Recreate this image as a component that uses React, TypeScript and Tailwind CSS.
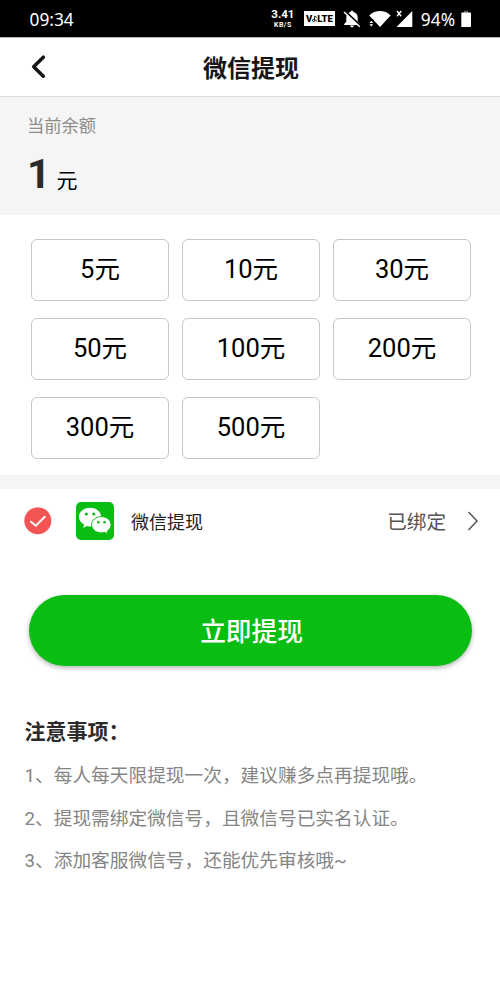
import { useState } from 'react'

const amounts = [5, 10, 30, 50, 100, 200, 300, 500]

const notes = [
  '1、每人每天限提现一次，建议赚多点再提现哦。',
  '2、提现需绑定微信号，且微信号已实名认证。',
  '3、添加客服微信号，还能优先审核哦~',
]

function StatusBar() {
  return (
    <div className="flex h-[37px] items-center bg-black pl-[29.5px] pr-[29px] pt-px font-['Noto_Sans',sans-serif] text-white">
      <span className="pt-px text-[17.3px] leading-none">09:34</span>
      <div className="ml-auto flex items-center">
        <div className="flex w-6 flex-col items-center font-['Roboto',sans-serif] font-bold leading-none">
          <span className="text-[11.5px] leading-[9px]">3.41</span>
          <span className="mt-[3px] text-[7px] leading-[6px] tracking-[0.5px]">KB/S</span>
        </div>
        <div className="ml-[9px] flex h-[15px] w-[31px] items-center justify-center bg-white font-['Roboto',sans-serif] text-[9.5px] font-black leading-none text-black">
          <span>V</span>
          <svg width="5" height="8" viewBox="0 0 5 8" fill="none" stroke="currentColor">
            <circle cx="1.6" cy="5.4" r="1.1" />
            <path d="M2.6 5V1.2l2 1.2M4 4.6v2" strokeWidth="0.9" />
          </svg>
          <span>LTE</span>
        </div>
        <svg className="ml-2" width="18" height="18" viewBox="0 0 18 18">
          <path d="M9 .8c.8 0 1.400.5 1.400 1.300 2.800.6 4.300 2.700 4.300 5.400v4.200l2.100 2.300v.9H1.200V14l2.100-2.300V7.500c0-2.700 1.500-4.800 4.300-5.400 0-.8.6-1.300 1.400-1.300zM7.100 15.400h3.800a1.900 1.900 0 0 1-3.800 0z" fill="#fff" />
          <path d="M2.200 1.300l16 15" stroke="#000" strokeWidth="2" />
          <path d="M1 2l15.800 14.700" stroke="#fff" strokeWidth="1.5" />
        </svg>
        <svg className="ml-2" width="22" height="18" viewBox="0 0 22 18" fill="#fff">
          <path d="M.2 5.5C6-.4 15.800-.4 21.600 5.500L11 17z" />
          <path d="M0 9.500h4.500l3 8H0z" fill="#000" />
          <path d="M.3 13l2-2.200 2 2.200zM.3 14.300h4l-2 2.200z" />
        </svg>
        <svg className="ml-[5px]" width="17" height="18" viewBox="0 0 17 18">
          <path d="M16.300 1v16H.5z" fill="#fff" />
          <path d="M0 0h7v7.500H0z" fill="#000" />
          <path d="M1 1l4.200 5.200M5.200 1L1 6.200" stroke="#fff" strokeWidth="1.400" />
        </svg>
        <span className="ml-2 pt-px text-[17.3px] leading-none">94%</span>
        <svg className="ml-[6px]" width="10" height="18" viewBox="0 0 10 18">
          <path d="M3 .8h4v2H3z" fill="#666" />
          <path d="M1 2.600h8.300a.7.7 0 0 1 .7.7v13a.7.7 0 0 1-.7.7H1a.7.7 0 0 1-.7-.7v-13a.7.7 0 0 1 .7-.7z" fill="#fff" />
        </svg>
      </div>
    </div>
  )
}

function WechatIcon() {
  return (
    <svg width="38" height="38" viewBox="0 0 38 38">
      <rect width="38" height="38" rx="5" fill="#09bd13" />
      <path d="M14 5.700c6.200 0 11.200 4.200 11.200 9.400s-5 9.400-11.200 9.400c-1.200 0-2.300-.1-3.300-.4L7.200 26l.9-3.400C5 21 2.900 18.200 2.900 15.100c0-5.200 4.900-9.400 11.100-9.400z" fill="#fff" />
      <circle cx="10.300" cy="12" r="1.600" fill="#09bd13" />
      <circle cx="17.800" cy="12" r="1.600" fill="#09bd13" />
      <path d="M25.300 14.600c5.400 0 9.700 3.600 9.700 8.100 0 2.600-1.500 4.900-3.700 6.400l.5 2.800-3-1.500c-1.100.3-2.300.5-3.500.5-5.400 0-9.700-3.700-9.700-8.200s4.300-8.100 9.700-8.100z" fill="#fff" stroke="#09bd13" strokeWidth="1" />
      <circle cx="22.300" cy="20.200" r="1.300" fill="#09bd13" />
      <circle cx="28.500" cy="20.200" r="1.300" fill="#09bd13" />
    </svg>
  )
}

export default function App() {
  const [selected, setSelected] = useState<number | null>(null)

  return (
    <div className="min-h-[988px] w-[500px] bg-white font-['Roboto','Noto_Sans_CJK_SC',sans-serif] text-black">
      <StatusBar />

      {/* Header */}
      <header className="flex h-[60px] items-center border-b border-t border-b-[#dedede] border-t-[#b5b5b5] px-[30px]">
        <button className="w-10">
          <svg width="18" height="26" viewBox="0 0 18 26" fill="none" stroke="#161616" strokeWidth="3.600" strokeLinecap="round" strokeLinejoin="round">
            <path d="M13.300 3.200L3.700 12.700l9.600 9.500" />
          </svg>
        </button>
        <h1 className="flex-1 pl-0.5 pt-1 text-center text-2xl font-bold text-[#161616]">微信提现</h1>
        <div className="w-10" />
      </header>

      {/* Balance */}
      <section className="h-[118px] bg-[#f5f5f5] px-[27px] pt-4">
        <p className="text-[17.300px] leading-[26px] text-[#8c8c8c]">当前余额</p>
        <div className="mt-[11px] flex items-baseline leading-[48px]">
          <span className="text-[41px] font-bold text-[#2b2b2b]">1</span>
          <span className="ml-1.5 text-[21px]">元</span>
        </div>
      </section>

      {/* Amounts */}
      <section className="grid grid-cols-3 gap-x-[13px] gap-y-[17px] pb-4 pl-[31px] pr-[29px] pt-6">
        {amounts.map((amount) => (
          <button
            key={amount}
            onClick={() => setSelected(amount)}
            className={`flex h-[62px] items-center justify-center rounded-md border text-[25.500px] leading-none ${
              selected === amount ? 'border-[#09bd13]' : 'border-[#c6c8c6]'
            }`}
          >
            {amount}元
          </button>
        ))}
      </section>

      {/* Payment method */}
      <section className="flex h-[78px] items-center border-t-[14px] border-[#f5f5f5] pl-6 pr-[21px]">
        <svg width="28" height="28" viewBox="0 0 28 28">
          <circle cx="13.800" cy="13.800" r="13.500" fill="#f35555" />
          <path d="M6.300 14.200l5.500 4.500 9.500-9.400" fill="none" stroke="#fff" strokeWidth="2" />
        </svg>
        <div className="ml-6">
          <WechatIcon />
        </div>
        <span className="ml-[17px] pt-[3px] text-lg text-[#222]">微信提现</span>
        <span className="ml-auto pt-[3px] text-[19.600px] text-[#555]">已绑定</span>
        <svg className="ml-[21px]" width="12" height="20" viewBox="0 0 12 20" fill="none" stroke="#555" strokeWidth="1.500">
          <path d="M1.500 1l8.500 9-8.500 9" />
        </svg>
      </section>

      <div className="pl-[29px] pr-7 pt-[42px]">
        <button className="flex h-[71px] w-full items-center justify-center rounded-full bg-[#09bd13] pl-0.5 pt-[3px] text-[25.700px] font-medium text-white shadow-[0_2px_5px_rgba(0,0,0,0.3)]">
          立即提现
        </button>
      </div>

      {/* Notes */}
      <section className="px-[24.500px] pt-[50px]">
        <h2 className="text-[21px] font-bold leading-8 text-[#2b2b2b]">注意事项：</h2>
        <div className="mt-[7px] text-[18.700px] leading-[42.500px] text-[#858585]">
          {notes.map((note) => (
            <p key={note}>{note}</p>
          ))}
        </div>
      </section>
    </div>
  )
}
